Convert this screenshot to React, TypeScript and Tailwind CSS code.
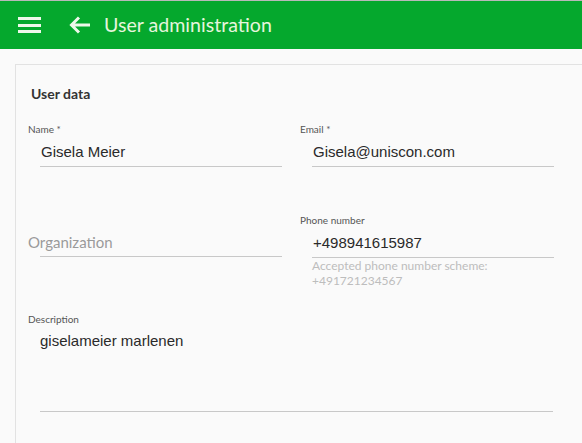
import React from "react";

const lato = { fontFamily: "Lato, 'Noto Sans', sans-serif" };

function Label({ children }: { children: React.ReactNode }) {
  return (
    <div className="h-[14px] text-[10px] leading-[14px] text-[#555]" style={lato}>
      {children}
    </div>
  );
}

function Value({ children }: { children: React.ReactNode }) {
  return (
    <div
      className="ml-3 w-[242px] border-b border-[#c8c8c8] pt-[7px] pb-[5px] text-[15px] leading-[18px] text-[#2a2a2a]"
      style={{ fontFamily: "'Liberation Sans', Arial, sans-serif" }}
    >
      <span className="pl-[1px]">{children}</span>
    </div>
  );
}

export default function App() {
  return (
    <div className="w-[582px] h-[443px] overflow-hidden bg-[#fafafa]" style={lato}>
      <div className="h-px bg-[#b9b9b9]" />
      <header className="flex h-[48px] items-center bg-[#05a82d]">
        <div className="ml-[18px] flex w-[23px] flex-col gap-[3.5px]">
          <div className="h-[3px] bg-[#eef8ea]" />
          <div className="h-[3px] bg-[#eef8ea]" />
          <div className="h-[3px] bg-[#eef8ea]" />
        </div>
        <svg className="ml-[27px]" width="24" height="20" viewBox="0 0 24 20" fill="none">
          <path d="M22 10H4M11 2.5 3.5 10l7.5 7.5" stroke="#eef8ea" strokeWidth="3" strokeLinecap="butt" />
        </svg>
        <div className="ml-[12px] text-[19.6px] leading-none text-[#e6f5dc]" style={lato}>
          User administration
        </div>
      </header>
      <main className="pl-[15px] pt-[15px]">
        <div className="h-[400px] border-l border-t border-[#e2e2e2] bg-[#fafafa] pl-[12px] pt-[20px]">
          <div className="ml-[3px] text-[14px] font-bold leading-[18px] text-[#333]">User data</div>
          <div className="mt-[19px] grid grid-cols-[272px_272px]">
            <div>
              <Label>Name *</Label>
              <Value>Gisela Meier</Value>
            </div>
            <div>
              <Label>Email *</Label>
              <Value>Gisela@uniscon.com</Value>
            </div>
            <div className="pt-[46px]">
              <div className="h-[14px]" />
              <div className="ml-3 w-[242px] border-b border-[#c8c8c8] pt-[6px] pb-[5px] text-[15px] leading-[18px]">
                <span className="-ml-3 text-[#9a9a9a]">Organization</span>
              </div>
            </div>
            <div className="pt-[46px]">
              <Label>Phone number</Label>
              <Value>+498941615987</Value>
              <div className="ml-3 text-[12px] leading-[15px] text-[#bdbdbd]">
                Accepted phone number scheme:
                <br />
                +491721234567
              </div>
            </div>
          </div>
          <div className="mt-[24px]">
            <Label>Description</Label>
            <div
              className="ml-3 h-[86px] w-[513px] border-b border-[#c8c8c8] pt-[6px] text-[15px] leading-[18px] text-[#2a2a2a]"
              style={{ fontFamily: "'Liberation Sans', Arial, sans-serif" }}
            >
              giselameier marlenen
            </div>
          </div>
        </div>
      </main>
    </div>
  );
}
